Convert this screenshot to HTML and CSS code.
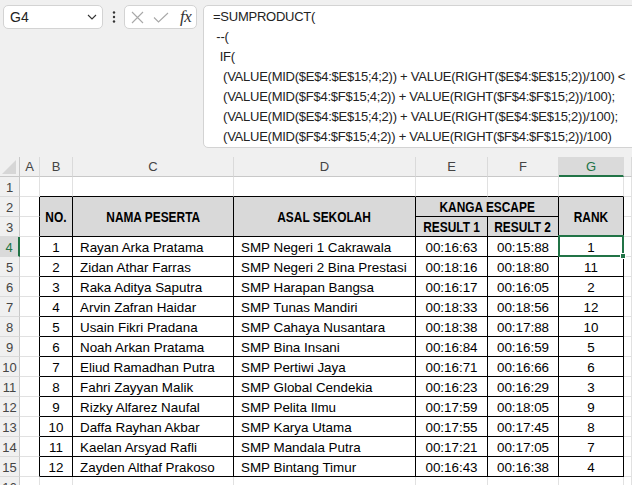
FILE: index.html
```html
<!DOCTYPE html>
<html>
<head>
<meta charset="utf-8">
<link rel="stylesheet" href="styles.css">
</head>
<body>
<div class="topbar">
  <div class="namebox"><span>G4</span>
    <svg width="10" height="6" viewBox="0 0 10 6"><path d="M1 1L5 5L9 1" stroke="#333" stroke-width="1.1" fill="none"/></svg>
  </div>
  <div class="dots"><svg width="4" height="24" viewBox="0 0 4 24"><circle cx="2" cy="7.5" r="1.2" fill="#333"/><circle cx="2" cy="12" r="1.2" fill="#333"/><circle cx="2" cy="16.5" r="1.2" fill="#333"/></svg></div>
  <div class="fxbox">
    <svg class="ic-x" width="13" height="13" viewBox="0 0 13 13"><path d="M1 1L12 12M12 1L1 12" stroke="#a8a8a8" stroke-width="1.1" fill="none"/></svg>
    <svg class="ic-ok" width="16" height="11" viewBox="0 0 16 11"><path d="M1 5.5L5.5 10L15 1" stroke="#a8a8a8" stroke-width="1.1" fill="none"/></svg>
    <span class="fx">fx</span>
  </div>
  <div class="formula">=SUMPRODUCT(
 --(
  IF(
   (VALUE(MID($E$4:$E$15;4;2)) + VALUE(RIGHT($E$4:$E$15;2))/100) &lt;
   (VALUE(MID($F$4:$F$15;4;2)) + VALUE(RIGHT($F$4:$F$15;2))/100);
   (VALUE(MID($E$4:$E$15;4;2)) + VALUE(RIGHT($E$4:$E$15;2))/100);
   (VALUE(MID($F$4:$F$15;4;2)) + VALUE(RIGHT($F$4:$F$15;2))/100)</div>
</div>

<div class="sheet">
  <div class="corner"><svg width="14" height="14" viewBox="0 0 14 14"><polygon points="14,0 14,14 0,14" fill="#d6d6d6"/></svg></div>
  <div class="ch">A</div><div class="ch">B</div><div class="ch">C</div><div class="ch">D</div><div class="ch">E</div><div class="ch">F</div><div class="ch sel">G</div><div class="ch"></div>

  <div class="rh">1</div><div class="cell"></div><div class="cell tt"></div><div class="cell tt"></div><div class="cell tt"></div><div class="cell tt"></div><div class="cell tt"></div><div class="cell tt"></div><div class="cell"></div>

  <div class="rh">2</div><div class="cell tl"></div>
  <div class="cell t th span2r"><span class="hx">NO.</span></div>
  <div class="cell t th span2r"><span class="hx">NAMA PESERTA</span></div>
  <div class="cell t th span2r"><span class="hx">ASAL SEKOLAH</span></div>
  <div class="cell t th span2c"><span class="hx">KANGA ESCAPE</span></div>
  <div class="cell t th span2r"><span class="hx">RANK</span></div>
  <div class="cell"></div>

  <div class="rh">3</div><div class="cell tl"></div>
  <div class="cell t th"><span class="hx">RESULT 1</span></div>
  <div class="cell t th"><span class="hx">RESULT 2</span></div>
  <div class="cell"></div>

  <div class="rh sel">4</div><div class="cell tl"></div><div class="cell t c">1</div><div class="cell t l">Rayan Arka Pratama</div><div class="cell t l">SMP Negeri 1 Cakrawala</div><div class="cell t c">00:16:63</div><div class="cell t c">00:15:88</div><div class="cell t c active">1<div class="selbox"></div><div class="handle"></div></div><div class="cell"></div>

  <div class="rh">5</div><div class="cell tl"></div><div class="cell t c">2</div><div class="cell t l">Zidan Athar Farras</div><div class="cell t l">SMP Negeri 2 Bina Prestasi</div><div class="cell t c">00:18:16</div><div class="cell t c">00:18:80</div><div class="cell t c">11</div><div class="cell"></div>

  <div class="rh">6</div><div class="cell tl"></div><div class="cell t c">3</div><div class="cell t l">Raka Aditya Saputra</div><div class="cell t l">SMP Harapan Bangsa</div><div class="cell t c">00:16:17</div><div class="cell t c">00:16:05</div><div class="cell t c">2</div><div class="cell"></div>

  <div class="rh">7</div><div class="cell tl"></div><div class="cell t c">4</div><div class="cell t l">Arvin Zafran Haidar</div><div class="cell t l">SMP Tunas Mandiri</div><div class="cell t c">00:18:33</div><div class="cell t c">00:18:56</div><div class="cell t c">12</div><div class="cell"></div>

  <div class="rh">8</div><div class="cell tl"></div><div class="cell t c">5</div><div class="cell t l">Usain Fikri Pradana</div><div class="cell t l">SMP Cahaya Nusantara</div><div class="cell t c">00:18:38</div><div class="cell t c">00:17:88</div><div class="cell t c">10</div><div class="cell"></div>

  <div class="rh">9</div><div class="cell tl"></div><div class="cell t c">6</div><div class="cell t l">Noah Arkan Pratama</div><div class="cell t l">SMP Bina Insani</div><div class="cell t c">00:16:84</div><div class="cell t c">00:16:59</div><div class="cell t c">5</div><div class="cell"></div>

  <div class="rh">10</div><div class="cell tl"></div><div class="cell t c">7</div><div class="cell t l">Eliud Ramadhan Putra</div><div class="cell t l">SMP Pertiwi Jaya</div><div class="cell t c">00:16:71</div><div class="cell t c">00:16:66</div><div class="cell t c">6</div><div class="cell"></div>

  <div class="rh">11</div><div class="cell tl"></div><div class="cell t c">8</div><div class="cell t l">Fahri Zayyan Malik</div><div class="cell t l">SMP Global Cendekia</div><div class="cell t c">00:16:23</div><div class="cell t c">00:16:29</div><div class="cell t c">3</div><div class="cell"></div>

  <div class="rh">12</div><div class="cell tl"></div><div class="cell t c">9</div><div class="cell t l">Rizky Alfarez Naufal</div><div class="cell t l">SMP Pelita Ilmu</div><div class="cell t c">00:17:59</div><div class="cell t c">00:18:05</div><div class="cell t c">9</div><div class="cell"></div>

  <div class="rh">13</div><div class="cell tl"></div><div class="cell t c">10</div><div class="cell t l">Daffa Rayhan Akbar</div><div class="cell t l">SMP Karya Utama</div><div class="cell t c">00:17:55</div><div class="cell t c">00:17:45</div><div class="cell t c">8</div><div class="cell"></div>

  <div class="rh">14</div><div class="cell tl"></div><div class="cell t c">11</div><div class="cell t l">Kaelan Arsyad Rafli</div><div class="cell t l">SMP Mandala Putra</div><div class="cell t c">00:17:21</div><div class="cell t c">00:17:05</div><div class="cell t c">7</div><div class="cell"></div>

  <div class="rh">15</div><div class="cell tl"></div><div class="cell t c">12</div><div class="cell t l">Zayden Althaf Prakoso</div><div class="cell t l">SMP Bintang Timur</div><div class="cell t c">00:16:43</div><div class="cell t c">00:16:38</div><div class="cell t c">4</div><div class="cell"></div>

  <div class="rh">16</div><div class="cell"></div><div class="cell"></div><div class="cell"></div><div class="cell"></div><div class="cell"></div><div class="cell"></div><div class="cell"></div><div class="cell"></div>
</div>
</body>
</html>
```

FILE: styles.css
```css
* { box-sizing: border-box; margin: 0; padding: 0; }

html, body {
  width: 632px;
  height: 485px;
  overflow: hidden;
}

body {
  background: #f0f0f0;
  font-family: "Liberation Sans", Arial, sans-serif;
  color: #000;
}

.topbar {
  height: 157px;
  display: flex;
  align-items: flex-start;
  padding: 5px 0 0 3px;
}

.namebox {
  width: 100px;
  height: 24px;
  background: #fff;
  border: 1px solid #d3d3d3;
  border-radius: 5px;
  display: flex;
  align-items: center;
  justify-content: space-between;
  padding: 0 5px 0 6px;
  font-size: 14px;
  color: #222;
}

.dots {
  width: 21px;
  height: 24px;
  display: flex;
  justify-content: center;
}

.fxbox {
  width: 73px;
  height: 24px;
  background: #fff;
  border: 1px solid #d3d3d3;
  border-radius: 5px;
  display: flex;
  align-items: center;
  padding-left: 6px;
}

.ic-x { margin-right: 9px; }
.ic-ok { margin-right: 11px; }

.fx {
  font-family: "Liberation Serif", "Times New Roman", serif;
  font-style: italic;
  font-size: 17px;
  color: #333;
  letter-spacing: -0.5px;
}

.formula {
  flex: 1;
  margin-left: 6px;
  margin-right: -12px;
  height: 143px;
  background: #fff;
  border: 1px solid #d3d3d3;
  border-radius: 5px;
  padding: 1px 0 0 9px;
  font-size: 13px;
  line-height: 20px;
  letter-spacing: -0.25px;
  white-space: pre;
  color: #222;
  overflow: hidden;
}

.sheet {
  display: grid;
  grid-template-columns: 20px 20px 33px 161px 182px 72px 71px 65px 8px;
  grid-auto-rows: 20px;
}

.corner, .ch, .rh {
  background: #f0f0f0;
  font-size: 13px;
  color: #444;
  display: flex;
  align-items: center;
  justify-content: center;
}

.corner {
  border-right: 1px solid #c8c8c8;
  border-bottom: 1px solid #c8c8c8;
  align-items: flex-end;
  justify-content: flex-end;
  padding: 0 3px 2px 0;
}

.ch {
  border-right: 1px solid #dadada;
  border-bottom: 1px solid #c8c8c8;
}

.ch.sel {
  background: #dadada;
  color: #217346;
  border-bottom: 2px solid #217346;
}

.rh {
  border-right: 1px solid #c8c8c8;
  border-bottom: 1px solid #dadada;
  padding-top: 1px;
}

.rh.sel {
  background: #dadada;
  color: #217346;
  border-right: 2px solid #217346;
}

.cell {
  background: #fff;
  border-right: 1px solid #e1e1e1;
  border-bottom: 1px solid #e1e1e1;
  display: flex;
  align-items: center;
  white-space: nowrap;
  font-size: 13.4px;
  padding-top: 1px;
}

.t { border-right-color: #000; border-bottom-color: #000; }
.tl { border-right-color: #000; }
.tt { border-bottom-color: #000; }

.c { justify-content: center; }
.l { padding-left: 7px; }

.th {
  background: #d9d9d9;
  justify-content: center;
  font-weight: bold;
  font-size: 14.5px;
}

.hx {
  display: inline-block;
  flex-shrink: 0;
  transform: scaleX(0.82);
  transform-origin: center;
}

.span2r { grid-row: span 2; }
.span2c { grid-column: span 2; }

.active { position: relative; }

.selbox {
  position: absolute;
  top: -2px;
  left: -1px;
  right: -1px;
  bottom: -1px;
  border: 2px solid #217346;
}

.handle {
  position: absolute;
  right: -3px;
  bottom: -3px;
  width: 6px;
  height: 6px;
  background: #217346;
  border: 1px solid #fff;
}
```
